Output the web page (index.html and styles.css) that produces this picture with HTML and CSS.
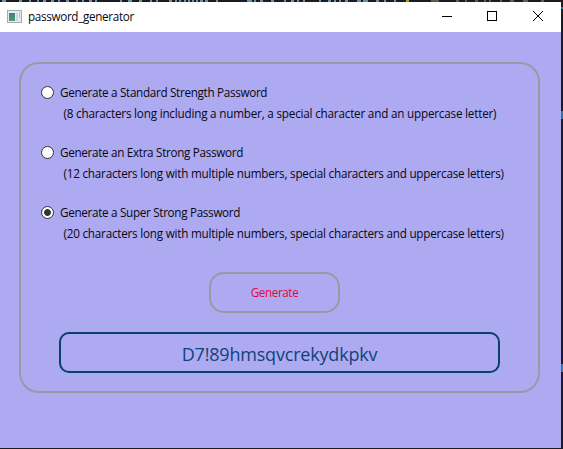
FILE: index.html
```
<!DOCTYPE html>
<html lang="en">
<head>
<meta charset="utf-8">
<title>password_generator</title>
<link rel="stylesheet" href="styles.css">
</head>
<body>
<svg class="backdrop" width="563" height="449" aria-hidden="true">
  <path d="M2 1h4M19 1h3M29 1h2M37 1h2M43 1h3M51 1h3M58 1h2M66 1h3M76 1h2M82 1h2M89 1h3M95 1h2M120 1h2M128 1h4M139 1h3M150 1h2M156 1h2M169 1h3M175 1h2M179 1h2M184 1h2M188 1h2M192 1h2M196 1h2M200 1h3M205 1h3M216 1h2M247 1h5M254 1h2M260 1h3M271 1h3M284 1h2M291 1h3M297 1h2M303 1h2M319 1h2M328 1h3M334 1h2M339 1h2M345 1h3M357 1h4M363 1h5M376 1h3M384 1h2M394 1h2" stroke="#6891a8" stroke-width="2"/>
  <path d="M406 1h3" stroke="#b29a20" stroke-width="2"/>
  <path d="M431 1h8M456 1h3M465 1h2M475 1h3M484 1h2M489 1h2M500 1h2M510 1h4M523 1h5M541 1h3" stroke="#52634a" stroke-width="2"/>
  <path d="M562 7v2M562 111v8M562 364v8" stroke="#2b7797" stroke-width="2"/>
</svg>
<div class="window">
  <header class="titlebar">
    <svg class="app-icon" width="16" height="14" viewBox="0 0 16 14">
      <defs><linearGradient id="pane" x2="0" y2="1"><stop stop-color="#427795"/><stop offset="1" stop-color="#579b73"/></linearGradient></defs>
      <rect x=".5" y=".5" width="14" height="12" fill="#e7ecef" stroke="#a3a9ad"/>
      <rect x="2" y="3" width="6" height="8" fill="url(#pane)"/>
      <rect x="9" y="3" width="2" height="8" fill="#cbd9dd"/>
      <rect x="12" y="2" width="1" height="6" fill="#b8c5c9"/>
    </svg>
    <span class="title">password_generator</span>
    <svg class="controls" width="138" height="30" viewBox="0 0 138 30" fill="none" stroke="#000">
      <path d="M19 14.5h10"/>
      <rect x="64.5" y="9.5" width="9" height="9"/>
      <path d="M110 9l10 10M120 9l-10 10"/>
    </svg>
  </header>
  <main class="content">
    <section class="card">
      <div class="option">
        <span class="radio"></span>
        <span class="label">Generate a Standard Strength Password</span>
        <span class="hint short">(8 characters long including a number, a special character and an uppercase letter)</span>
      </div>
      <div class="option">
        <span class="radio"></span>
        <span class="label">Generate an Extra Strong Password</span>
        <span class="hint">(12 characters long with multiple numbers, special characters and uppercase letters)</span>
      </div>
      <div class="option">
        <span class="radio checked"></span>
        <span class="label">Generate a Super Strong Password</span>
        <span class="hint">(20 characters long with multiple numbers, special characters and uppercase letters)</span>
      </div>
      <button class="generate">Generate</button>
      <div class="result"><span>D7!89hmsqvcrekydkpkv</span></div>
    </section>
  </main>
</div>
</body>
</html>
```
FILE: styles.css
```
* { box-sizing: border-box; }
body {
  margin: 0;
  width: 563px;
  height: 449px;
  padding: 2px 2px 1px 0;
  overflow: hidden;
  background: #1b1b22;
  color: #080812;
  font: 11.7px/20px "Open Sans", "Noto Sans", sans-serif;
}
.backdrop { position: absolute; left: 0; top: 0; }
.window {
  position: relative;
  display: flex;
  flex-direction: column;
  width: 561px;
  height: 446px;
  background: #adaaf2;
}
.titlebar {
  display: flex;
  align-items: center;
  height: 30px;
  padding-left: 7px;
  background: #fff;
}
.app-icon { margin-bottom: 1px; }
.title { margin: 0 0 2px 5px; letter-spacing: -.33px; white-space: nowrap; }
.controls { margin-left: auto; }
.content { flex: 1; padding: 30px 21px 55px 19px; }
.card {
  display: flex;
  flex-direction: column;
  height: 331px;
  padding: 18px 38px 18px 20px;
  border: 2px solid #9899a5;
  border-radius: 20px;
}
.option {
  display: grid;
  grid-template-columns: 13px 1fr;
  grid-template-rows: 21px 21px;
  column-gap: 6px;
  height: 60px;
  white-space: nowrap;
}
.radio {
  width: 13px;
  height: 13px;
  margin-top: 4px;
  border: 1px solid #333;
  border-radius: 50%;
  background: #fff;
}
.checked { background: radial-gradient(circle, #333 3px, #fff 3.8px); }
.label { letter-spacing: -.31px; }
.hint { grid-column: 2; margin-left: 3.5px; letter-spacing: -.22px; }
.short { letter-spacing: -.2px; }
.generate {
  width: 131px;
  height: 41px;
  margin: 10px 0 0 168px;
  padding: 0 0 2px;
  border: 2px solid #9899a5;
  border-radius: 15px;
  background: transparent;
  color: #e60832;
  font: inherit;
  letter-spacing: -.4px;
}
.result {
  display: flex;
  align-items: center;
  justify-content: center;
  width: 441px;
  height: 41px;
  margin: 19px 0 0 18px;
  padding-top: 2px;
  border: 2px solid #073f70;
  border-radius: 10px;
  color: #114279;
  font-size: 18px;
  letter-spacing: -.19px;
}
```
